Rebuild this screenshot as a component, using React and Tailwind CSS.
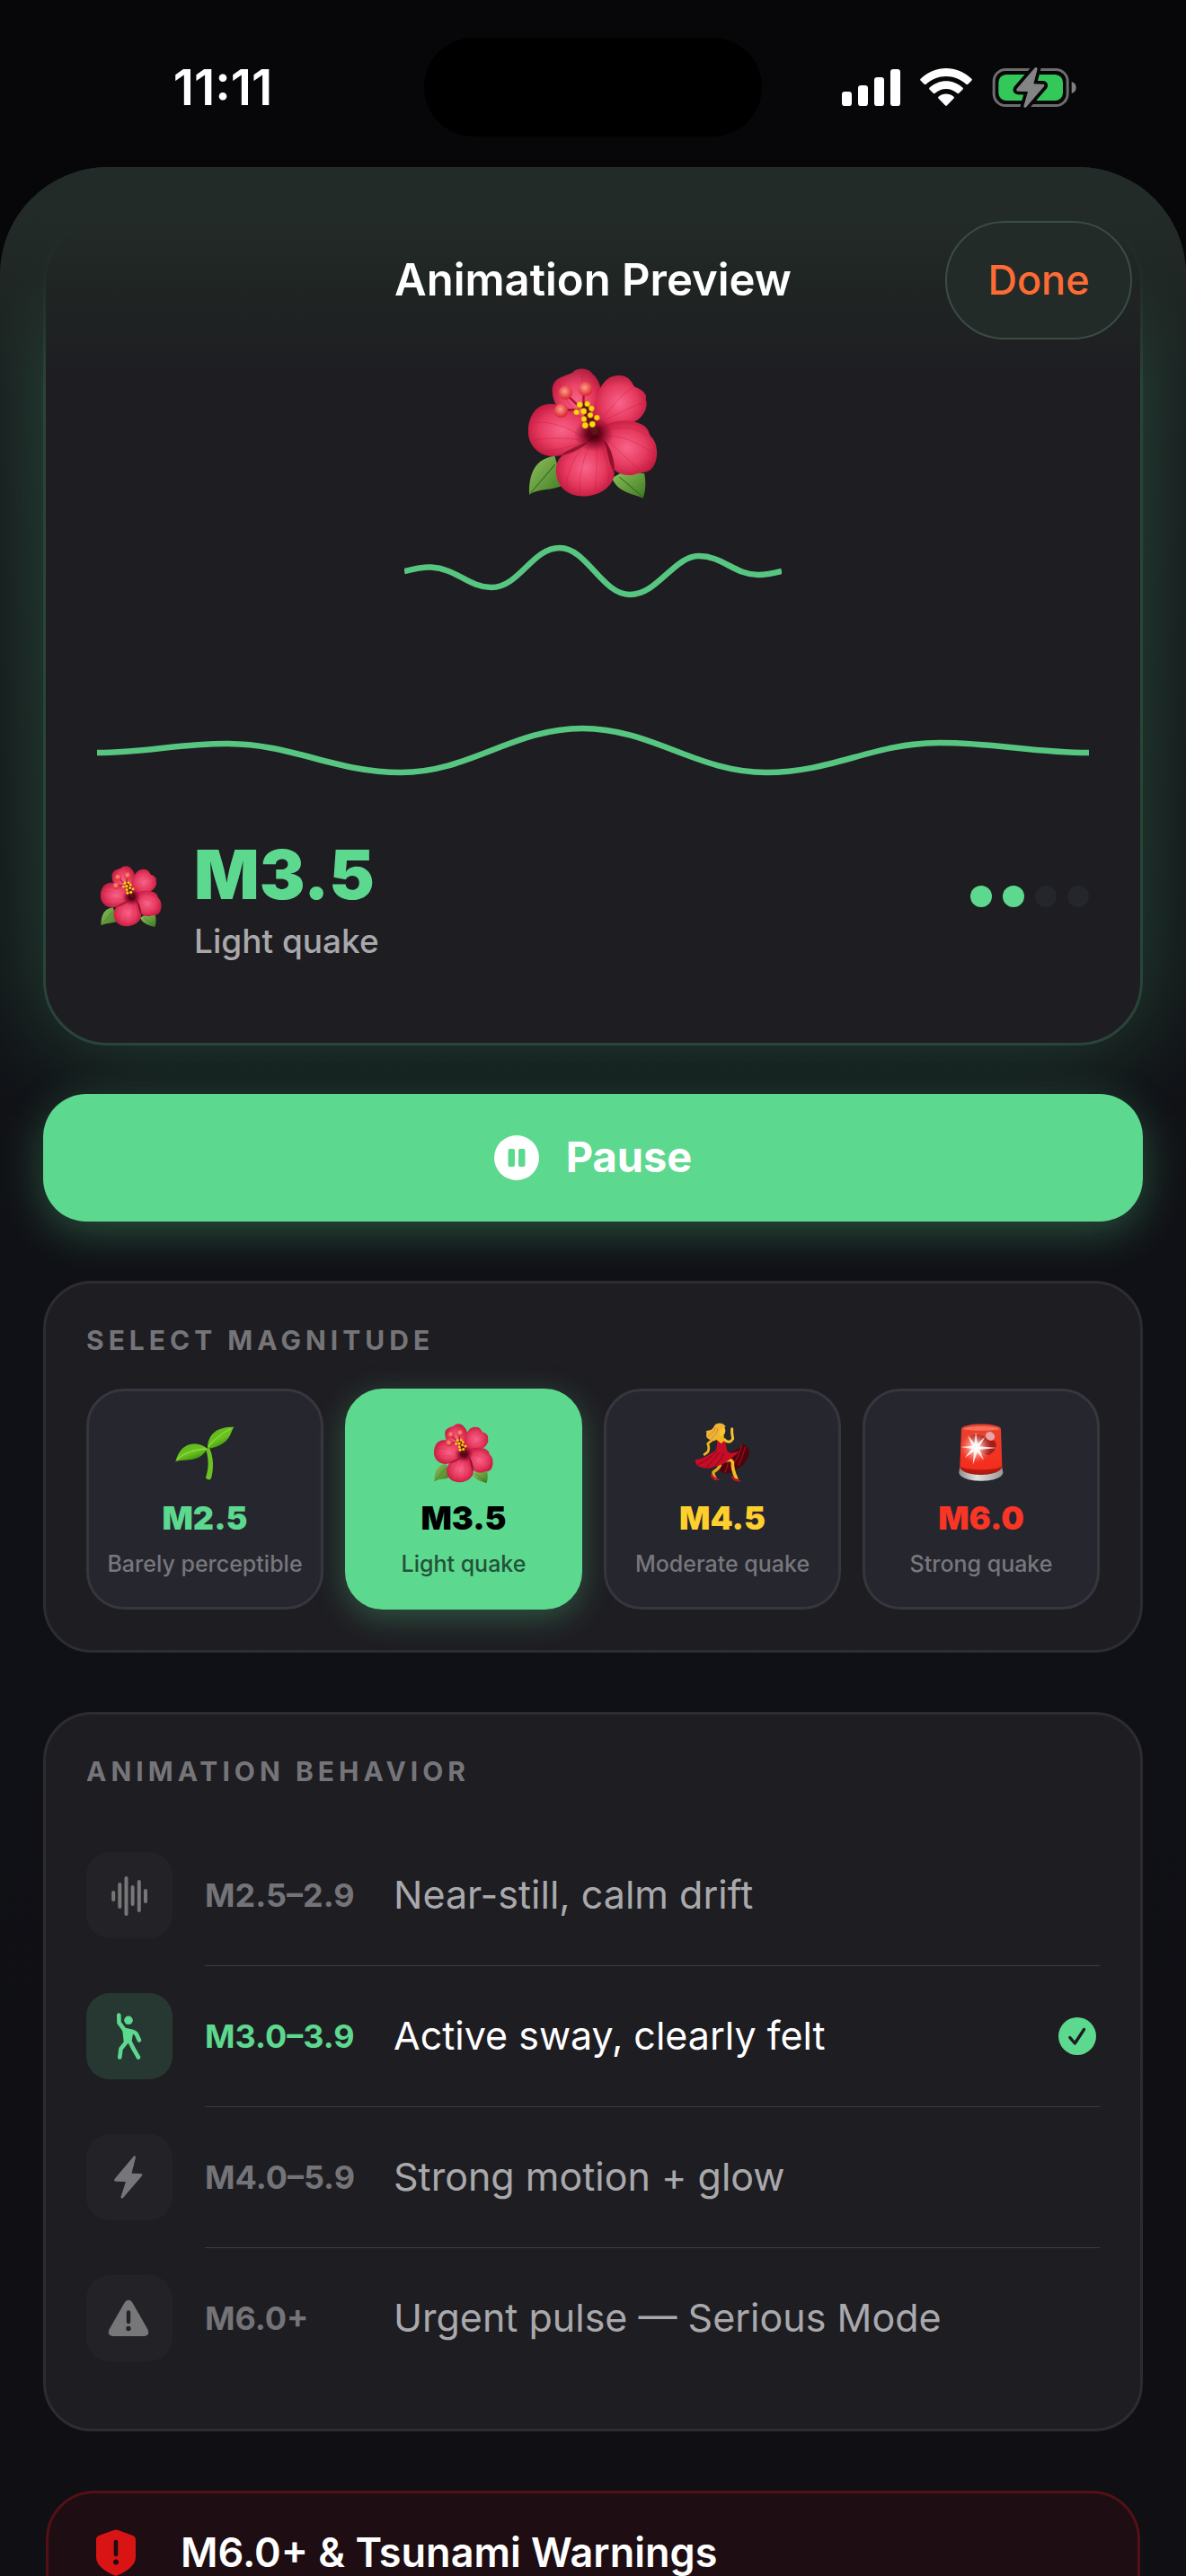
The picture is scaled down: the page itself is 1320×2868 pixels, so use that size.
import React, { useId, useState } from 'react';

const MAGNITUDES = [
  { id: 'M2.5', label: 'Barely perceptible', color: 'text-[#5dd88f]', Emoji: Seedling, size: 'w-[66px]' },
  { id: 'M3.5', label: 'Light quake', color: 'text-[#5dd88f]', Emoji: Hibiscus, size: 'w-[66px]' },
  { id: 'M4.5', label: 'Moderate quake', color: 'text-[#ffcf2e]', Emoji: Dancer, size: 'w-[62px]' },
  { id: 'M6.0', label: 'Strong quake', color: 'text-[#fa3526]', Emoji: Siren, size: 'w-[50px]' },
];

const BEHAVIORS = [
  { range: 'M2.5–2.9', text: 'Near-still, calm drift', Icon: WaveformIcon },
  { range: 'M3.0–3.9', text: 'Active sway, clearly felt', Icon: FigureIcon, active: true },
  { range: 'M4.0–5.9', text: 'Strong motion + glow', Icon: BoltIcon },
  { range: 'M6.0+', text: 'Urgent pulse — Serious Mode', Icon: WarningIcon },
];

// smooth curve through a list of peaks and troughs
function wavePath(points) {
  return points.reduce((d, [x, y], i) => {
    if (i === 0) return `M${x} ${y}`;
    const [px, py] = points[i - 1];
    const k = (x - px) * 0.38;
    return `${d} C${px + k} ${py} ${x - k} ${y} ${x} ${y}`;
  }, '');
}

const SHORT_WAVE =
  'M0 36 C12 33 22 31 30 31.5 C58 33 72 54 97 54 C128 54 142 10 173 10 C203 10 220 62 251 62 C282 62 300 19 328 19 C354 19 368 40 394 40 C404 40 412 38 420 36';
const LONG_WAVE = wavePath([
  [0, 48],
  [144, 38],
  [338, 70],
  [540, 21],
  [745, 70],
  [938, 37],
  [1104, 48],
]);

function Hibiscus({ className }) {
  const id = useId();
  const petal = `url(#${id}p)`;
  const leaf = `url(#${id}l)`;
  return (
    <svg viewBox="147 90 430 432" className={className} aria-hidden="true">
      <defs>
        <radialGradient id={`${id}p`} cx="0.5" cy="0.5" r="0.62">
          <stop offset="0" stopColor="#f8648a" />
          <stop offset="0.5" stopColor="#e83c61" />
          <stop offset="1" stopColor="#b90f35" />
        </radialGradient>
        <linearGradient id={`${id}l`} x1="0" y1="0" x2="1" y2="1">
          <stop offset="0" stopColor="#8fc25c" />
          <stop offset="1" stopColor="#3f7a22" />
        </linearGradient>
        <radialGradient id={`${id}b`} cx="0.45" cy="0.4" r="0.6">
          <stop offset="0" stopColor="#ff9c8c" />
          <stop offset="1" stopColor="#d8232b" />
        </radialGradient>
        <radialGradient id={`${id}d`}>
          <stop offset="0" stopColor="#4a0012" />
          <stop offset="0.35" stopColor="#5c0016" stopOpacity="0.9" />
          <stop offset="1" stopColor="#8a0c2c" stopOpacity="0" />
        </radialGradient>
      </defs>
      <path d="M150 510 C148 440 170 390 235 382 L262 480 C225 498 185 488 150 510Z" fill={leaf} />
      <path d="M528 522 C500 508 445 505 425 455 L470 430 L533 440 C538 470 538 495 528 522Z" fill={leaf} />
      <path d="M152 508 L236 410 M530 520 L450 452" stroke="#36691f" strokeWidth="3" fill="none" />
      <path d="M350 305 C300 280 220 230 227 155 C235 110 285 118 300 98 C325 85 350 93 360 108 C385 130 390 160 388 175 C378 220 372 260 365 300Z" fill={petal} />
      <path d="M360 295 C362 210 380 115 445 114 C480 112 490 135 500 152 C525 158 545 180 537 192 C550 225 520 265 490 270 C440 275 400 280 360 295Z" fill={petal} />
      <path d="M370 300 C320 240 250 190 190 215 C150 235 140 290 150 325 C165 370 205 390 255 380 C300 370 345 345 370 300Z" fill={petal} />
      <path d="M375 300 C410 260 490 255 530 280 C550 295 545 305 555 318 C580 340 580 395 560 420 C545 440 525 435 510 440 C470 455 430 440 415 400 C400 365 375 340 375 300Z" fill={petal} />
      <path d="M365 325 C310 345 240 370 239 425 C237 470 265 510 320 515 C370 520 430 490 433 440 C437 395 415 340 395 325Z" fill={petal} />
      <g stroke="#b80f37" strokeWidth="2" strokeOpacity="0.45" fill="none">
        <path d="M335 340 C290 400 270 450 275 495 M350 345 C325 400 315 460 318 510 M372 345 C378 400 372 460 368 505 M388 345 C412 400 418 440 412 480" />
        <path d="M330 320 C280 285 220 265 165 270 M330 330 C270 320 210 320 160 330 M320 340 C270 355 230 365 200 365" />
        <path d="M405 300 C450 280 500 285 545 315 M410 315 C460 315 510 335 565 375 M412 330 C445 365 485 400 520 430" />
        <path d="M395 255 C430 210 465 170 495 155 M405 260 C450 240 495 215 530 205 M330 260 C290 220 255 180 250 135 M345 250 C330 200 325 150 328 105" />
      </g>
      <path d="M433 440 C436 400 420 350 400 330 L418 405Z M255 380 C300 372 330 352 345 335 C300 352 270 366 255 380Z" fill="#5c0018" fillOpacity="0.55" />
      <ellipse cx="364" cy="310" rx="66" ry="58" fill={`url(#${id}d)`} />
      <path d="M362 300 L345 240 M330 215 L331 165 M320 222 L272 175 M315 228 L258 229" stroke="#a80f33" strokeWidth="7" fill="none" />
      <path d="M368 300 L352 262 L334 216" stroke="#5c1418" strokeWidth="24" strokeLinecap="round" fill="none" />
      <g fill="#ffd614" stroke="#c88a00" strokeWidth="1.5">
        <circle cx="318" cy="211" r="10" />
        <circle cx="343" cy="209" r="9" />
        <circle cx="357" cy="224" r="9" />
        <circle cx="307" cy="236" r="9" />
        <circle cx="331" cy="233" r="10" />
        <circle cx="353" cy="246" r="9" />
        <circle cx="375" cy="254" r="9" />
        <circle cx="332" cy="259" r="9" />
        <circle cx="336" cy="280" r="10" />
        <circle cx="360" cy="276" r="10" />
      </g>
      <g fill={`url(#${id}b)`}>
        <circle cx="270" cy="171" r="23" />
        <circle cx="337" cy="159" r="24" />
        <circle cx="256" cy="231" r="23" />
      </g>
    </svg>
  );
}

function Seedling({ className }) {
  const id = useId();
  return (
    <svg viewBox="154 171 66 60" className={className} aria-hidden="true">
      <defs>
        <linearGradient id={id} x1="0" y1="0" x2="0.6" y2="1">
          <stop offset="0" stopColor="#57b31c" />
          <stop offset="0.6" stopColor="#6cc21f" />
          <stop offset="1" stopColor="#2f8607" />
        </linearGradient>
      </defs>
      <path d="M188 196 L192 195 C197 205 197 219 194 229 C193 231 189 231 188 228 C192 216 191 206 188 196Z" fill="#6cc222" />
      <path d="M190 196 C190 184 196 171 219.600 171.700 C215 176 217 192 190 196Z" fill={`url(#${id})`} />
      <path d="M190 196 C183 189 161 184 154.300 210.700 C160 206 179 214 190 196Z" fill={`url(#${id})`} />
      <path d="M191 194 C197 186 204 180 216 173.500 M189 196 C178 197 167 198 156 208" stroke="#a6e05e" strokeWidth="1" fill="none" />
    </svg>
  );
}

function Dancer({ className }) {
  return (
    <svg viewBox="38 28 186 202" className={className} aria-hidden="true">
      <path d="M150 128 C175 125 190 112 200 100 C212 102 224 120 221 128 C218 150 204 172 184 178 C160 205 128 200 118 184 C128 160 138 142 150 128Z" fill="#4d040c" />
      <path d="M196 102 C190 130 180 150 168 165 M208 108 C200 135 192 155 184 170 M150 150 C150 170 145 185 138 195" stroke="#a70a20" strokeWidth="4" fill="none" />
      <path d="M126 158 C125 178 112 185 101 193 C100 203 102 208 108 214" stroke="#e5a81d" strokeWidth="10" strokeLinecap="round" strokeLinejoin="round" fill="none" />
      <path d="M128 160 C150 150 162 150 165 160 C164 180 170 198 178 214" stroke="#f3bb25" strokeWidth="11" strokeLinecap="round" strokeLinejoin="round" fill="none" />
      <path d="M92 200 C92 212 96 220 122 219 C118 210 104 216 97 199Z M160 206 C163 220 178 228 193 223 C188 214 174 220 166 205Z" fill="#c2121f" />
      <path d="M113 80 C114 95 113 108 109 120 C90 132 65 150 41 151 C38 165 50 176 64 178 C80 182 92 180 104 174 C122 174 150 160 190 122 C170 130 152 132 146 120 C144 104 140 92 136 80 L128 98Z" fill="#c50d28" />
      <path d="M112 124 C90 145 72 158 50 168 M120 128 C104 150 90 165 76 178 M136 130 C128 148 118 162 106 172" stroke="#7d0719" strokeWidth="3" fill="none" />
      <path d="M110 82 C98 84 88 92 82 98 C88 110 86 118 82 126 L71 134" stroke="#f2b71f" strokeWidth="8" strokeLinecap="round" strokeLinejoin="round" fill="none" />
      <path d="M138 84 C148 96 158 94 166 82 L163 62 L163 48" stroke="#f5c02d" strokeWidth="9" strokeLinecap="round" strokeLinejoin="round" fill="none" />
      <path d="M112 70 L136 68 L137 88 L127 98 L113 86Z" fill="#f2b71f" />
      <ellipse cx="127" cy="55" rx="14" ry="17" fill="#f8c62f" />
      <path d="M142 42 C136 26 108 25 102 42 C94 56 84 52 76 56 C80 60 76 66 78 68 C74 76 84 84 92 86 C104 88 122 78 122 60 C118 52 130 46 142 42Z" fill="#eeb33a" />
      <path d="M108 44 C104 60 92 64 84 74 M116 46 C114 64 100 74 92 84" stroke="#c48515" strokeWidth="2.500" fill="none" />
    </svg>
  );
}

function Siren({ className }) {
  const id = useId();
  return (
    <svg viewBox="920 32 150 194" className={className} aria-hidden="true">
      <defs>
        <linearGradient id={`${id}r`} x1="0" y1="0" x2="0" y2="1">
          <stop offset="0" stopColor="#e8432f" />
          <stop offset="1" stopColor="#f62b1c" />
        </linearGradient>
        <linearGradient id={`${id}g`} x1="0" y1="0" x2="1" y2="0">
          <stop offset="0" stopColor="#8f8f8f" />
          <stop offset="0.4" stopColor="#e0e0de" />
          <stop offset="1" stopColor="#979797" />
        </linearGradient>
        <radialGradient id={`${id}w`}>
          <stop offset="0" stopColor="#fff" />
          <stop offset="0.3" stopColor="#ffd9d2" stopOpacity="0.8" />
          <stop offset="1" stopColor="#ff7c6c" stopOpacity="0" />
        </radialGradient>
      </defs>
      <path d="M924 175 L921 195 C924 233 1066 233 1068 195 L1064 175Z" fill={`url(#${id}g)`} />
      <path d="M923 172 C922 213 1066 213 1065 172Z" fill="#a81b12" />
      <path d="M929 50 C932 28 1058 28 1061 50 L1065 174 C1060 200 930 200 924 174Z" fill={`url(#${id}r)`} />
      <path d="M936 50 C940 38 1050 38 1055 50 C1040 57 950 57 936 50Z" fill="#f8715c" />
      <path d="M960 72 C990 60 1010 80 1040 90 C1056 110 1035 130 1020 138 C990 130 965 110 960 72Z" fill="#a51d18" />
      <path d="M924 174 C945 190 1045 190 1065 174 C1064 205 927 205 924 174Z" fill="#b8190f" />
      <ellipse cx="1025" cy="74" rx="16" ry="14" fill="#e7a4a4" transform="rotate(35 1025 74)" />
      <circle cx="977" cy="112" r="52" fill={`url(#${id}w)`} />
      <path d="M977 60 L983 99 L1008 76 L990 108 L1048 113 L990 119 L1004 154 L982 127 L967 170 L971 125 L940 146 L964 116 L926 110 L965 106 L950 72 L973 98Z" fill="#fff" fillOpacity="0.85" />
    </svg>
  );
}

function SignalIcon() {
  return (
    <svg viewBox="111 78 195 123" className="w-[65px]" fill="#fff" aria-hidden="true">
      <rect x="111" y="153" width="33" height="48" rx="10" />
      <rect x="165" y="132" width="33" height="69" rx="10" />
      <rect x="219" y="105" width="33" height="96" rx="10" />
      <rect x="273" y="78" width="33" height="123" rx="10" />
    </svg>
  );
}

function WifiIcon() {
  return (
    <svg viewBox="374 76 173 126" className="w-[58px]" fill="#fff" aria-hidden="true">
      <path d="M375 112 C424 64 497 64 546 112 Q547 115 545 117 L533 129 Q530 131 527 129 C490 94 431 94 394 129 Q391 131 388 129 L376 117 Q374 115 375 112Z" />
      <path d="M405 141 C437 111 484 111 516 141 Q518 144 516 146 L503 159 Q500 161 497 159 C476 140 445 140 424 159 Q421 161 418 159 L405 146 Q403 144 405 141Z" />
      <path d="M435 171 C450 158 471 158 486 171 Q488 174 486 176 L463 200 Q460.500 202 458 200 L435 176 Q433 174 435 171Z" />
    </svg>
  );
}

function BatteryIcon() {
  const bolt = 'M757 73 L696 143 Q692 151 700 152 L733 153 L719 202 Q721 210 728 204 L787 136 Q791 129 784 128 L752 127 L765 77 Q764 70 757 73Z';
  return (
    <svg viewBox="613 69 282 141" className="w-[94px]" aria-hidden="true">
      <rect x="619.500" y="79.500" width="246" height="120" rx="39" fill="none" stroke="#6d6d6e" strokeWidth="9" />
      <path d="M879 120 Q894 124 894 139.500 Q894 155 879 159Z" fill="#7f7f80" />
      <rect x="635" y="96" width="215" height="87" rx="26" fill="#34c759" />
      <path d={bolt} fill="#070709" stroke="#070709" strokeWidth="22" strokeLinejoin="round" />
      <path d={bolt} fill="#848485" />
    </svg>
  );
}

function PauseIcon() {
  return (
    <svg viewBox="0 0 50 50" className="size-[50px]" aria-hidden="true">
      <circle cx="25" cy="25" r="25" fill="#fff" />
      <rect x="15.500" y="15" width="7.500" height="20" rx="2" fill="#5dd88f" />
      <rect x="27" y="15" width="7.500" height="20" rx="2" fill="#5dd88f" />
    </svg>
  );
}

function WaveformIcon() {
  return (
    <svg viewBox="0 0 96 96" className="size-24" stroke="currentColor" strokeWidth="4" strokeLinecap="round" aria-hidden="true">
      <path d="M30.200 45V53 M37.300 36V61 M44.500 29V69 M51.600 39V58 M58.800 33V65 M66 43V55" />
    </svg>
  );
}

function FigureIcon() {
  return (
    <svg viewBox="0 0 96 96" className="size-24" stroke="currentColor" strokeWidth="4.600" strokeLinecap="round" strokeLinejoin="round" fill="none" aria-hidden="true">
      <circle cx="47" cy="30.300" r="4.800" fill="currentColor" stroke="none" />
      <path d="M36.300 24.500 L36.500 33 L42.500 41 L50 42.500 Q54.500 43.500 56 46 L59 52.500" />
      <path d="M42.500 41 L50 43 L48.500 52 L44 54Z" fill="currentColor" />
      <path d="M45 54 L38.500 62 L37.300 71.500 M48 53 L52 61 L58 71.500" />
    </svg>
  );
}

function BoltIcon() {
  return (
    <svg viewBox="0 0 96 96" className="size-24" fill="currentColor" aria-hidden="true">
      <path d="M53 24.500 L31.500 50 Q30.500 52.500 33 52.800 L44 53 L38.500 70 Q38.500 72.500 41 71 L62 46.500 Q63 44.200 60.500 44 L50.500 43.800 L55 26 Q55 23.500 53 24.500Z" />
    </svg>
  );
}

function WarningIcon() {
  return (
    <svg viewBox="0 0 96 96" className="size-24" aria-hidden="true">
      <path d="M43 30 Q47 25.500 51 30 L68.500 60.500 Q71 67.500 64.500 68 H29.500 Q23 67.500 25.500 60.500Z" fill="currentColor" />
      <path d="M47 41.500 V52" stroke="#222227" strokeWidth="4.400" strokeLinecap="round" />
      <circle cx="47" cy="59.500" r="2.700" fill="#222227" />
    </svg>
  );
}

function CheckIcon() {
  return (
    <svg viewBox="0 0 42 42" className="size-[42px]" fill="none" aria-hidden="true">
      <circle cx="21" cy="21" r="21" fill="#5dd88f" />
      <path d="M12.800 22.500 L18.300 29 L28.500 13.500" stroke="#1c1d20" strokeWidth="3.400" strokeLinecap="round" strokeLinejoin="round" />
    </svg>
  );
}

function ShieldIcon() {
  return (
    <svg viewBox="0 0 44 52" className="w-11 shrink-0" aria-hidden="true">
      <path d="M19.500 1 Q22 0 24.500 1 L41 7 Q44 8.500 44 11 V31 C44 41 33 47.500 22 52 C11 47.500 0 41 0 31 V11 Q0 8.500 3 7Z" fill="#d91414" />
      <path d="M22 14 V28" stroke="#1e0e13" strokeWidth="4.600" strokeLinecap="round" />
      <circle cx="22" cy="36.500" r="3" fill="#1e0e13" />
    </svg>
  );
}

function StatusBar() {
  return (
    <div className="grid h-[186px] shrink-0 grid-cols-[1fr_376px_1fr] pt-[42px] pb-[34px]">
      <div className="flex items-center justify-center pl-6 text-[55px] font-semibold text-white">11:11</div>
      <div className="rounded-full bg-black" />
      <div className="flex items-center justify-end gap-[22px] pr-[122px]">
        <SignalIcon />
        <WifiIcon />
        <BatteryIcon />
      </div>
    </div>
  );
}

function Card({ title, children }) {
  return (
    <section className="mt-[66px] rounded-[54px] border-3 border-[#2d2d31] bg-[#1e1d22] p-[45px]">
      <h2 className="text-[30px]/[36px] font-bold tracking-[5px] text-[#757579] uppercase">{title}</h2>
      {children}
    </section>
  );
}

export default function App() {
  const [selected, setSelected] = useState('M3.5');

  return (
    <div className="flex h-screen flex-col overflow-hidden bg-[#070709] font-['Inter','Noto_Sans',sans-serif]">
      <StatusBar />

      <div className="min-h-0 flex-1 overflow-hidden rounded-t-[120px] bg-[#0f0f14] bg-linear-to-b from-[#1a1e20] from-0% via-[#101116] via-45% to-[#0f0f14]">
        <header className="relative z-10 -mb-[187px] grid h-[244px] grid-cols-[1fr_auto_1fr] items-start bg-linear-to-b from-[#232b28] from-20% via-[#202724]/85 via-50% to-transparent px-[60px] pt-[60px]">
          <h1 className="col-start-2 text-[49px]/[132px] font-semibold text-white">Animation Preview</h1>
          <button
            type="button"
            className="h-[132px] w-[208px] justify-self-end rounded-full border-2 border-[#3a4c46] bg-[#232b29] text-[45px] font-medium text-[#ff6b35]"
          >
            Done
          </button>
        </header>

        <main className="px-12">
          <section className="rounded-[72px] border-3 border-[#2a4439] bg-[#1e1d22] px-[57px] pt-[164px] pb-[95px] shadow-[0_0_110px_rgba(93,216,143,0.26)]">
            <Hibiscus className="mx-auto w-[144px]" />
            <svg viewBox="0 0 420 72" className="mx-auto mt-[45px] block w-[420px]" fill="none" aria-hidden="true">
              <path d={SHORT_WAVE} stroke="#57c681" strokeWidth="6.500" />
            </svg>
            <svg viewBox="0 0 1104 96" className="mt-[118px] block w-full" fill="none" aria-hidden="true">
              <path d={LONG_WAVE} stroke="#57c681" strokeWidth="6.500" />
            </svg>
            <div className="mt-[45px] flex items-center">
              <Hibiscus className="w-[76px] px-1" />
              <div className="ml-8 flex flex-col gap-[15px]">
                <p className="text-[76px]/[84px] font-black text-[#5dd88f]">M3.5</p>
                <p className="text-[37px]/[36px] font-medium text-[#a9a9ac]">Light quake</p>
              </div>
              <div className="ml-auto flex gap-3">
                <span className="size-6 rounded-full bg-[#5dd88f]" />
                <span className="size-6 rounded-full bg-[#5dd88f]" />
                <span className="size-6 rounded-full bg-[#25252c]" />
                <span className="size-6 rounded-full bg-[#25252c]" />
              </div>
            </div>
          </section>

          <button
            type="button"
            className="mt-[54px] flex h-[142px] w-full items-center justify-center gap-[30px] rounded-[48px] bg-[#5dd88f] text-[47px] font-bold text-white shadow-[0_12px_48px_rgba(93,216,143,0.32)]"
          >
            <PauseIcon />
            Pause
          </button>

          <Card title="Select Magnitude">
            <div className="mt-9 grid grid-cols-4 gap-6">
              {MAGNITUDES.map(({ id, label, color, Emoji, size }) => {
                const on = id === selected;
                return (
                  <button
                    key={id}
                    type="button"
                    aria-pressed={on}
                    onClick={() => setSelected(id)}
                    className={`flex flex-col items-center gap-3 rounded-[42px] border-3 py-[33px] ${
                      on
                        ? 'border-[#5dd88f] bg-[#5dd88f] shadow-[0_9px_36px_rgba(93,216,143,0.3)]'
                        : 'border-[#36363e] bg-[#26262e]'
                    }`}
                  >
                    <span className="flex h-[72px] items-center">
                      <Emoji className={size} />
                    </span>
                    <span className={`text-[36px]/[48px] font-black ${on ? 'text-black' : color}`}>{id}</span>
                    <span className={`text-[25px]/[30px] font-medium whitespace-nowrap ${on ? 'text-[#235237]' : 'text-[#77777d]'}`}>
                      {label}
                    </span>
                  </button>
                );
              })}
            </div>
          </Card>

          <Card title="Animation Behavior">
            <ul className="mt-[42px]">
              {BEHAVIORS.map(({ range, text, Icon, active }) => (
                <li key={range} className="group flex items-center gap-9">
                  <span className={`rounded-[26px] ${active ? 'bg-[#263831] text-[#5dd88f]' : 'bg-[#222227] text-[#77777a]'}`}>
                    <Icon />
                  </span>
                  <div className="flex h-[157px] flex-1 items-center border-b border-[#3d3d41] group-last:h-[156px] group-last:border-0">
                    <span className={`w-[210px] text-[36px] font-bold ${active ? 'text-[#5dd88f]' : 'text-[#747478]'}`}>
                      {range}
                    </span>
                    <span className={`text-[43px] ${active ? 'text-white' : 'text-[#a9a9ac]'}`}>{text}</span>
                    {active && (
                      <span className="ml-auto pr-1">
                        <CheckIcon />
                      </span>
                    )}
                  </div>
                </li>
              ))}
            </ul>
          </Card>

          <section className="mx-[3px] mt-[66px] rounded-[54px] border-3 border-[#541115] bg-[#1e0e13] px-[53px] pt-10 pb-12">
            <div className="flex items-center gap-[50px]">
              <ShieldIcon />
              <h2 className="text-[45px]/[48px] font-semibold text-white">M6.0+ &amp; Tsunami Warnings</h2>
            </div>
          </section>
        </main>
      </div>
    </div>
  );
}
